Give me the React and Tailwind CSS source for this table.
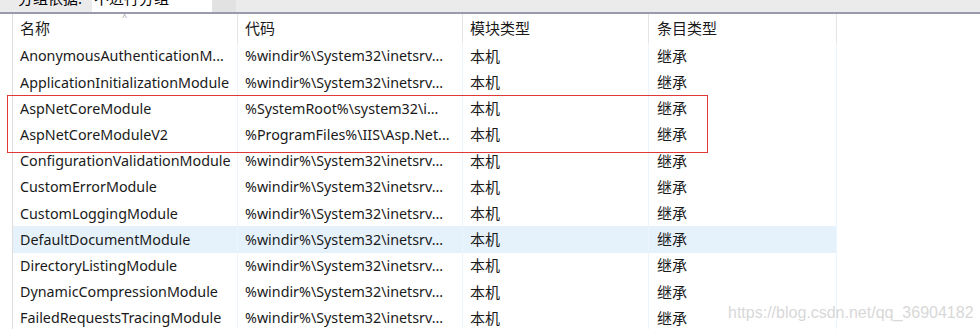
import React from "react";

const rows = [
  ["AnonymousAuthenticationM...", "%windir%\\System32\\inetsrv..."],
  ["ApplicationInitializationModule", "%windir%\\System32\\inetsrv..."],
  ["AspNetCoreModule", "%SystemRoot%\\system32\\i..."],
  ["AspNetCoreModuleV2", "%ProgramFiles%\\IIS\\Asp.Net..."],
  ["ConfigurationValidationModule", "%windir%\\System32\\inetsrv..."],
  ["CustomErrorModule", "%windir%\\System32\\inetsrv..."],
  ["CustomLoggingModule", "%windir%\\System32\\inetsrv..."],
  ["DefaultDocumentModule", "%windir%\\System32\\inetsrv..."],
  ["DirectoryListingModule", "%windir%\\System32\\inetsrv..."],
  ["DynamicCompressionModule", "%windir%\\System32\\inetsrv..."],
  ["FailedRequestsTracingModule", "%windir%\\System32\\inetsrv..."],
];

const font = { fontFamily: '"Noto Sans", "Noto Sans CJK SC", sans-serif' };

export default function App() {
  return (
    <div className="relative w-[980px] h-[329px] overflow-hidden bg-white text-[#1a1a1a]" style={font}>
      {/* top toolbar (clipped) */}
      <div className="h-[12px] bg-[#ebebeb] flex overflow-hidden relative">
        <div className="w-[92px] overflow-hidden">
          <span className="block text-[15px] leading-[15px] -mt-[9px] ml-[18px] text-black">分组依据:</span>
        </div>
        <div className="w-[120px] bg-white overflow-hidden">
          <span className="block text-[15px] leading-[15px] -mt-[9px] ml-[2px] text-black">不进行分组</span>
        </div>
        <div className="w-[24px] bg-[#e2e2e2]"></div>
      </div>
      <div className="h-[2px] bg-[#9a9aae]"></div>

      <div className="ml-[12px] border-l border-[#dedede] h-full">
        {/* header */}
        <div className="flex h-[29px] text-[15px] relative">
          <div className="w-[225px] border-r border-[#e5e5e5] pl-[7px] flex items-center relative">
            名称
            <span className="absolute left-[109px] -top-[2px] text-[9px] leading-[9px] text-[#9a9a9a]">^</span>
          </div>
          <div className="w-[225px] border-r border-[#e5e5e5] pl-[7px] flex items-center">代码</div>
          <div className="w-[186px] border-r border-[#e5e5e5] pl-[7px] flex items-center">模块类型</div>
          <div className="w-[188px] border-r border-[#e5e5e5] pl-[8px] flex items-center">条目类型</div>
        </div>
        {rows.map((r, i) => (
          <div
            key={i}
            className={`flex h-[26.2px] text-[14.3px] whitespace-nowrap ${i === 7 ? "bg-[#e5f1fb]" : ""} w-[824px]`}
          >
            <div className="w-[225px] border-r border-[#eef4fb] pl-[7px] flex items-center overflow-hidden">{r[0]}</div>
            <div className="w-[225px] border-r border-[#eef4fb] pl-[7px] flex items-center overflow-hidden">{r[1]}</div>
            <div className="w-[186px] border-r border-[#eef4fb] pl-[7px] flex items-center text-[15px]">本机</div>
            <div className="w-[188px] border-r border-[#eef4fb] pl-[8px] flex items-center text-[15px]">继承</div>
          </div>
        ))}
      </div>

      {/* red annotation box */}
      <div className="absolute left-[7px] top-[95px] w-[701px] h-[58px] border border-[#e0393a]"></div>

      {/* watermark */}
      <div
        className="absolute left-[728px] top-[301px] text-[16px] text-[#d8d8d8]"
        style={{ fontFamily: '"Liberation Sans", Arial, sans-serif' }}
      >
        https://blog.csdn.net/qq_36904182
      </div>
    </div>
  );
}
